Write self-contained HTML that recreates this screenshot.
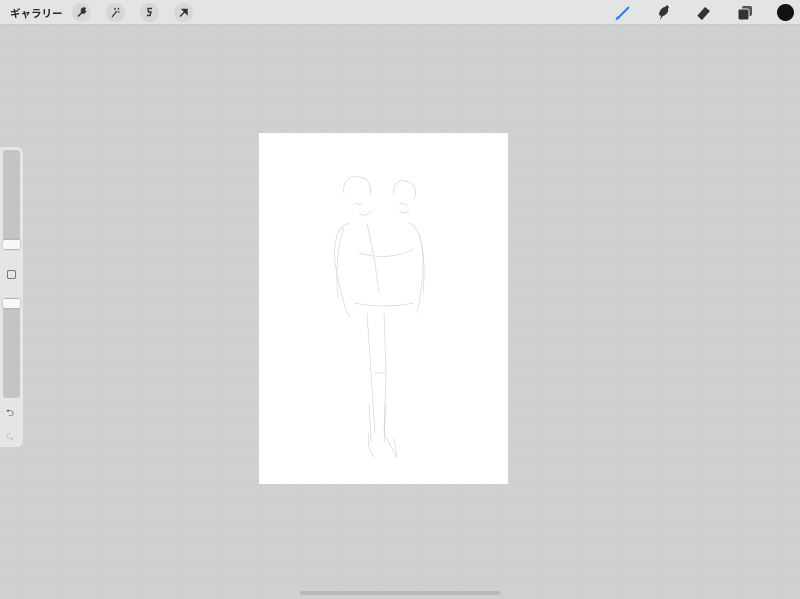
<!DOCTYPE html>
<html><head><meta charset="utf-8"><style>
*{margin:0;padding:0;box-sizing:border-box}
body{width:800px;height:599px;overflow:hidden;background:#cfd0d2;position:relative;font-family:"Liberation Sans","Noto Sans CJK JP",sans-serif;
background-image:linear-gradient(rgba(0,0,0,0.018) 1px,transparent 1px),linear-gradient(90deg,rgba(0,0,0,0.018) 1px,transparent 1px);background-size:20px 20px}
.top{position:absolute;left:0;top:0;width:800px;height:25px;background:#e3e4e4;border-bottom:1px solid #c8c9ca}
.gal{position:absolute;left:10px;top:6px;font-size:10.5px;font-weight:bold;color:#2a2a2a}
.ib{position:absolute;top:3px;width:19px;height:19px;border-radius:50%;background:#d6d7d8}
.ib svg{position:absolute;left:4px;top:4px}
.side{position:absolute;left:0;top:147px;width:23px;height:300px;background:#e4e5e5;border-radius:0 6px 6px 0}
.tr{position:absolute;left:3px;width:17px;background:#c3c4c5;border-radius:3px}
.kn{position:absolute;left:3px;width:17px;height:9px;background:#f8f8f8;border-radius:2px;box-shadow:0 0 2px rgba(0,0,0,.25)}
.canvas{position:absolute;left:259px;top:133px;width:249px;height:351px;background:#fff}
.home{position:absolute;left:300px;top:591px;width:200px;height:4px;border-radius:2px;background:#b8b9ba}
</style></head><body>
<div class="top">
<div class="gal">ギャラリー</div>
<div class="ib" style="left:72px"><svg width="11" height="11" viewBox="0 0 11 11"><path d="M2 9.5L6 5.5M5.5 3.5a2 2 0 0 0 2.5 2.5L9.5 4.5 8 3 9 1.5a2.2 2.2 0 0 0-3.5 2z" stroke="#333" stroke-width="1.5" fill="#333"/></svg></div>
<div class="ib" style="left:106px"><svg width="11" height="11" viewBox="0 0 11 11"><path d="M2 10L7 4M5 1v2M8 1l1 1.5M9.5 5H8" stroke="#333" stroke-width="1.3" fill="none"/></svg></div>
<div class="ib" style="left:140px"><svg width="11" height="11" viewBox="0 0 11 11"><path d="M8 1.5H4L4.5 5H7l-1 3.5H3" stroke="#333" stroke-width="1.4" fill="none"/></svg></div>
<div class="ib" style="left:174px"><svg width="11" height="11" viewBox="0 0 11 11"><path d="M2 9.5L8 3.5M4.5 2.5H9V7z" stroke="#333" stroke-width="1.4" fill="#333"/></svg></div>
<svg style="position:absolute;left:613px;top:5px" width="18" height="16" viewBox="0 0 18 16"><path d="M16 2L6 12" stroke="#2f7ff0" stroke-width="2"/><path d="M6 11c-2 0-3 2-3.5 4 2 0 4-1 4.5-3z" fill="#2f7ff0"/></svg>
<svg style="position:absolute;left:654px;top:4px" width="18" height="18" viewBox="0 0 18 18"><path d="M6 16l1-4-2-1c0-4 3-8 6-8l2-2 2 2-1 2c1 3-2 6-5 7l-1 1z" fill="#333"/></svg>
<svg style="position:absolute;left:695px;top:5px" width="18" height="16" viewBox="0 0 18 16"><path d="M2 11l8-9 5 4-8 9z" fill="#333"/><path d="M2 11l3 3" stroke="#e3e4e4" stroke-width="1"/></svg>
<svg style="position:absolute;left:737px;top:5px" width="16" height="16" viewBox="0 0 16 16"><rect x="5" y="1" width="10" height="10" rx="2" fill="#555"/><rect x="1" y="4" width="11" height="11" rx="2" fill="#333" stroke="#e3e4e4" stroke-width="1"/></svg>
<div style="position:absolute;left:777px;top:4px;width:17px;height:17px;border-radius:50%;background:#141014"></div>
</div>
<div class="side">
<div class="tr" style="top:3px;height:100px"></div>
<div class="kn" style="top:93px"></div>
<div style="position:absolute;left:7px;top:123px;width:9px;height:9px;border:1px solid #777;border-radius:2px"></div>
<div class="tr" style="top:151px;height:100px"></div>
<div class="kn" style="top:152px"></div>
<div style="position:absolute;left:6px;top:259px;font-size:10px;color:#555">⮌</div>
<div style="position:absolute;left:6px;top:282px;font-size:10px;color:#bbb">⮎</div>
</div>
<div class="canvas">
<svg width="249" height="351" viewBox="0 0 249 351" fill="none" stroke="#d6d6d6" stroke-width="0.7">
<path d="M85 60c-2-12 6-18 14-16 8 0 14 6 12 18M135 62c-2-10 4-16 12-14 8 2 12 10 8 18"/>
<path d="M95 70l8 2M140 70l8 2M100 80c5 4 10 2 12-2M140 78c4 3 8 2 10-1"/>
<path d="M90 90c-10 4-16 12-14 40l6 30 6 20 4 4M108 90l8 40 4 30M150 90c10 4 14 20 14 40 0 20-4 40-6 50"/>
<path d="M100 120c20 6 40 4 55-4M95 170c20 4 40 4 60 0"/>
<path d="M108 180l4 60 4 60M125 180l2 60-2 60M115 240h12M110 270l2 40M127 270l-2 40"/>
<path d="M110 300c-2 10 0 20 6 24M125 300c4 10 10 16 12 24M138 325l-3-20"/>
<path d="M85 95c-8 20-8 50-6 70M160 100c6 20 6 40 4 60"/>
</svg>
</div>
<div class="home"></div>
</body></html>
